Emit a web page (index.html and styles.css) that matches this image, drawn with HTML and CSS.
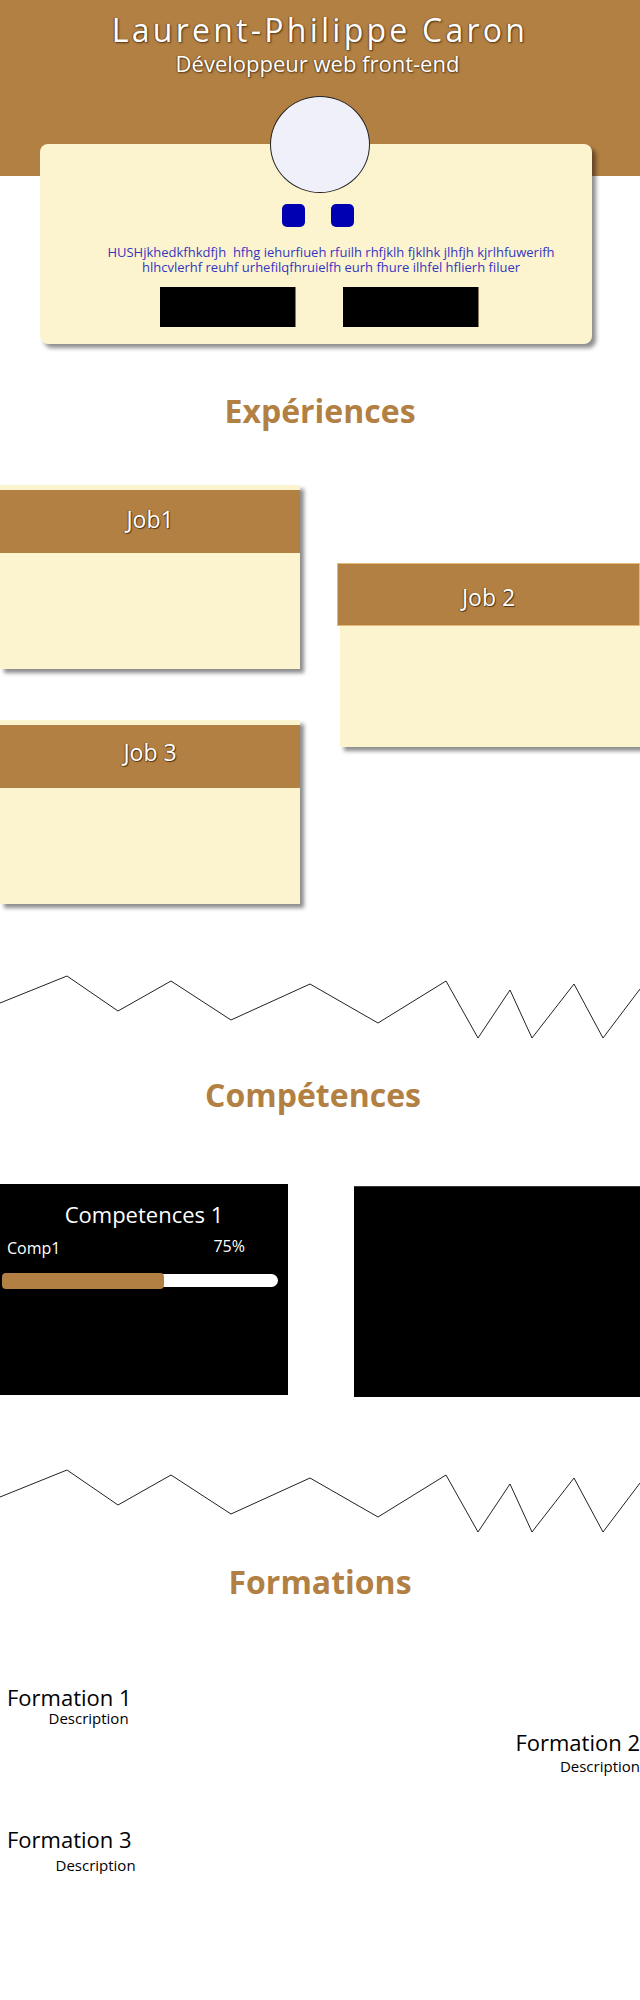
FILE: index.html
```html
<!DOCTYPE html>
<html lang="fr">
<head>
<meta charset="utf-8">
<title>Laurent-Philippe Caron</title>
<link rel="stylesheet" href="styles.css">
</head>
<body>
<header class="hero">
  <h1 class="hero-title">Laurent-Philippe Caron</h1>
  <p class="hero-subtitle">Développeur web front-end</p>
</header>

<section class="profile">
  <div class="avatar"></div>
  <div class="socials">
    <span class="social"></span>
    <span class="social"></span>
  </div>
  <p class="bio">HUSHjkhedkfhkdfjh&nbsp; hfhg iehurfiueh rfuilh rhfjklh fjklhk jlhfjh kjrlhfuwerifh hlhcvlerhf reuhf urhefilqfhruielfh eurh fhure ilhfel hflierh filuer</p>
  <div class="buttons">
    <span class="btn"></span>
    <span class="btn"></span>
  </div>
</section>

<h2 class="section-title section-title--exp">Expériences</h2>
<section class="jobs">
  <div class="jobs-col">
    <article class="job job--first">
      <h3 class="job-head">Job1</h3>
      <div class="job-body"></div>
    </article>
    <article class="job job--third">
      <h3 class="job-head">Job 3</h3>
      <div class="job-body"></div>
    </article>
  </div>
  <div class="jobs-col jobs-col--right">
    <article class="job job--lifted">
      <h3 class="job-head">Job 2</h3>
      <div class="job-body"></div>
    </article>
  </div>
</section>

<svg class="zigzag zigzag--one" viewBox="0 0 640 66" preserveAspectRatio="none">
  <polyline points="0,29 67,2 118,37 171,7 231,46 310,10 378,49 446,7 478,64 510,16 532,64 574,10 603,64 640,15" fill="none" stroke="#222" stroke-width="1"/>
</svg>

<h2 class="section-title section-title--skills">Compétences</h2>
<section class="skills">
  <div class="skill-card">
    <h3 class="skill-title">Competences 1</h3>
    <div class="skill-row">
      <span class="skill-name">Comp1</span>
      <span class="skill-value">75%</span>
    </div>
    <div class="skill-track">
      <div class="skill-fill" style="width:162px"></div>
    </div>
  </div>
  <div class="skill-card skill-card--empty"></div>
</section>

<svg class="zigzag zigzag--two" viewBox="0 0 640 66" preserveAspectRatio="none">
  <polyline points="0,29 67,2 118,37 171,7 231,46 310,10 378,49 446,7 478,64 510,16 532,64 574,10 603,64 640,15" fill="none" stroke="#222" stroke-width="1"/>
</svg>

<h2 class="section-title section-title--edu">Formations</h2>
<section class="formations">
  <div class="formation">
    <span class="formation-title">Formation 1</span>
    <span class="formation-desc">Description</span>
  </div>
  <div class="formation formation--right">
    <span class="formation-title">Formation 2</span>
    <span class="formation-desc">Description</span>
  </div>
  <div class="formation formation--third">
    <span class="formation-title">Formation 3</span>
    <span class="formation-desc">Description</span>
  </div>
</section>
</body>
</html>
```

FILE: styles.css
```css
* { box-sizing: border-box; }

body {
  margin: 0;
  font-family: "Open Sans", "DejaVu Sans", sans-serif;
  color: #000;
  background: #fff;
}

/* ---------- hero ---------- */
.hero {
  background: #b38043;
  height: 176px;
  padding-top: 11px;
  text-align: center;
  color: #fff;
}

.hero-title {
  margin: 0;
  font-size: 32px;
  font-weight: 400;
  line-height: 38px;
  letter-spacing: 3.25px;
  text-shadow: 1px 1px 2px #4f3210, -1px 0 1px rgba(79, 50, 16, 0.6);
}

.hero-subtitle {
  margin: 0;
  padding-right: 5px;
  font-size: 22px;
  line-height: 28px;
  text-shadow: 1px 1px 2px #4f3210, -1px 0 1px rgba(79, 50, 16, 0.6);
}

/* ---------- profile card ---------- */
.profile {
  margin: -32px 48px 0 40px;
  background: #fcf4cf;
  border-radius: 8px;
  box-shadow: 4px 4px 4px rgba(0, 0, 0, 0.45);
  padding-bottom: 17px;
  display: flex;
  flex-direction: column;
  align-items: center;
}

.avatar {
  width: 100px;
  height: 97px;
  border: 1px solid #222;
  border-radius: 50%;
  background: #f0f0fb;
  margin: -48px 0 0 8px;
}

.socials {
  display: flex;
  gap: 26px;
  margin: 11px 0 0 4px;
}

.social {
  width: 23px;
  height: 23px;
  border-radius: 5px;
  background: #0000b3;
}

.bio {
  margin: 18px 0 0 30px;
  width: 480px;
  font-size: 13px;
  line-height: 15px;
  color: #3535c2;
  text-align: center;
}

.buttons {
  display: flex;
  gap: 48px;
  margin: 12px 0 0 6px;
}

.btn {
  width: 135px;
  height: 40px;
  background: #000;
  box-shadow: 1px 0 0 #8a7a5a;
}

/* ---------- section titles ---------- */
.section-title {
  margin: 0;
  text-align: center;
  font-size: 32px;
  font-weight: 700;
  line-height: 44px;
  color: #b38043;
}

.section-title--exp { margin-top: 45px; }
.section-title--skills { margin-top: 33px; padding-right: 14px; }
.section-title--edu { margin-top: 26px; }

/* ---------- jobs ---------- */
.jobs {
  display: flex;
  gap: 40px;
  margin-top: 52px;
}

.jobs-col {
  width: 300px;
  display: flex;
  flex-direction: column;
  gap: 51px;
}

.jobs-col--right { padding-top: 78px; }

.job {
  background: #fcf4cf;
  padding-top: 5px;
  box-shadow: 4px 4px 4px rgba(0, 0, 0, 0.45);
}

.job-head {
  margin: 0;
  height: 63px;
  background: #b38043;
  color: #fff;
  font-size: 23px;
  font-weight: 400;
  display: flex;
  align-items: center;
  justify-content: center;
  text-shadow: 1px 1px 1px #4f3210, -1px 0 1px rgba(79, 50, 16, 0.6);
}

.job--first .job-head { padding-bottom: 5px; }
.job--third .job-head { padding-bottom: 10px; }

.job-body { height: 116px; }

.job--lifted { padding-top: 0; }
.job--lifted .job-head {
  margin-left: -3px;
  padding-top: 5px;
  border: 1px solid #e6b977;
}
.job--lifted .job-body { height: 121px; }

/* ---------- zigzag ---------- */
.zigzag {
  display: block;
  width: 100%;
  height: 66px;
}

.zigzag--one { margin-top: 70px; }
.zigzag--two { margin-top: 71px; }

/* ---------- skills ---------- */
.skills {
  display: flex;
  justify-content: space-between;
  align-items: flex-start;
  margin-top: 67px;
}

.skill-card {
  width: 288px;
  height: 211px;
  background: #000;
  color: #fff;
  padding-top: 15px;
}

.skill-card--empty {
  width: 286px;
  margin-top: 2px;
  padding: 0;
  border-top: 1px solid #3a3a3a;
}

.skill-title {
  margin: 0;
  font-size: 22px;
  font-weight: 400;
  line-height: 30px;
  text-align: center;
}

.skill-row {
  display: flex;
  justify-content: space-between;
  align-items: flex-start;
  margin-top: 8px;
  padding: 0 43px 0 7px;
  font-size: 16px;
  line-height: 22px;
}

.skill-value { margin-top: -2px; }

.skill-track {
  display: flex;
  margin: 15px 10px 0 2px;
  height: 13px;
  background: #fff;
  border-radius: 7px;
}

.skill-fill {
  height: 16px;
  margin-top: -1px;
  background: #b38043;
  border-radius: 4px;
}

/* ---------- formations ---------- */
.formations {
  display: grid;
  grid-template-columns: 1fr 1fr;
  padding-left: 7px;
  margin-top: 81px;
}

.formation {
  justify-self: start;
  display: flex;
  flex-direction: column;
  align-items: flex-end;
}

.formation--right {
  grid-column: 2;
  grid-row: 1;
  justify-self: end;
  margin-top: 45px;
}

.formation--third {
  grid-column: 1;
  grid-row: 2;
  margin-top: 52px;
}

.formation-title {
  font-size: 22px;
  line-height: 24px;
}

.formation-desc {
  font-size: 15px;
  line-height: 18px;
  margin-right: 3px;
}

.formation--right .formation-desc { margin: 3px 0 0 0; }

.formation--third .formation-desc {
  margin: 5px -4px 0 0;
}
```
